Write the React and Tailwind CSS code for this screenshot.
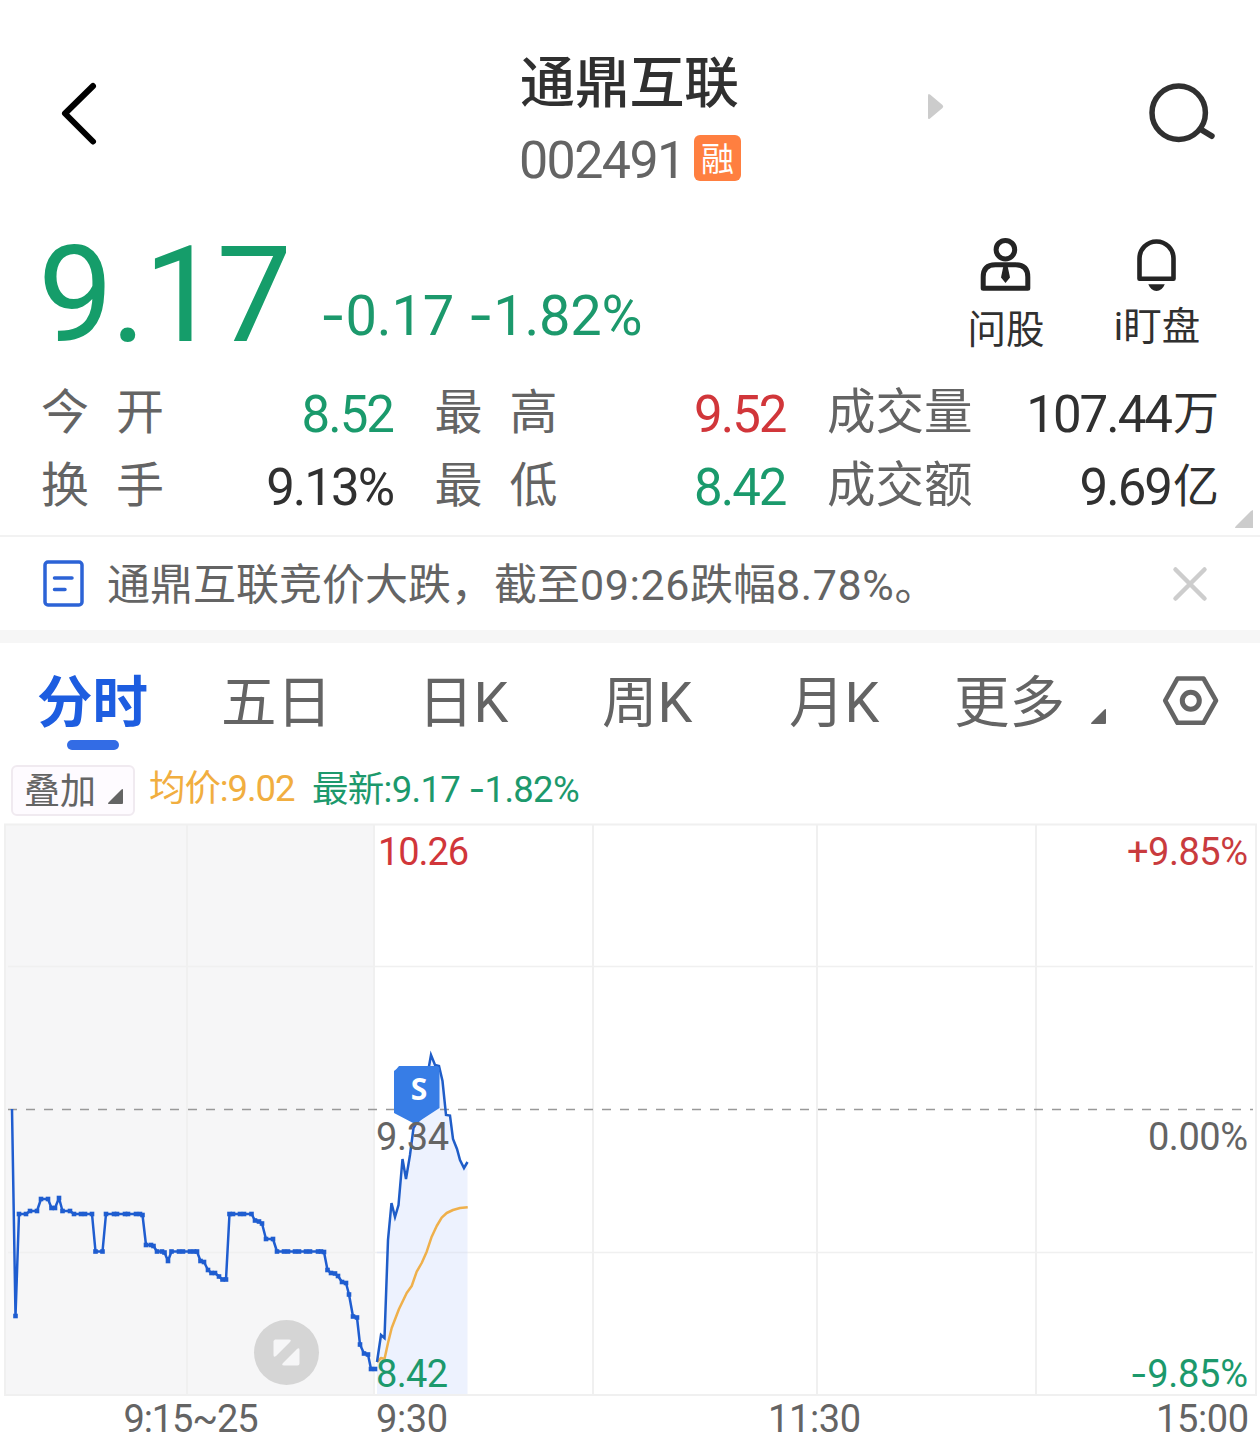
import React, { useState } from "react";

const stats = [
  { label: "今开", value: "8.52", color: "text-[#1a9a6c]", spread: true },
  { label: "最高", value: "9.52", color: "text-[#d1363a]", spread: true },
  { label: "成交量", value: "107.44", unit: "万", color: "text-[#303030]" },
  { label: "换手", value: "9.13%", color: "text-[#303030]", spread: true },
  { label: "最低", value: "8.42", color: "text-[#1a9a6c]", spread: true },
  { label: "成交额", value: "9.69", unit: "亿", color: "text-[#303030]" },
];

const tabs = [
  { name: "分时", pos: "ml-[37px] w-[110px]" },
  { name: "五日", pos: "ml-[74px] w-[109px]" },
  { name: "日K", pos: "ml-[88px] w-[93px]" },
  { name: "周K", pos: "ml-[91px] w-[94px]" },
  { name: "月K", pos: "ml-[93px] w-[94px]" },
  { name: "更多", pos: "ml-[71px] w-[108px]" },
];

// Call auction, 9:15 - 9:25
const auction = [
  [12, 1109], [15.5, 1316], [19, 1214], [26, 1214], [30, 1211], [37, 1211],
  [41, 1199], [48, 1199], [51.5, 1208], [55, 1208], [59, 1198], [62.5, 1211],
  [70, 1211], [74, 1214], [81, 1214], [85, 1214], [92, 1214], [95.5, 1251.5],
  [102.5, 1251.5], [106, 1214], [114, 1214], [117, 1214], [125, 1214],
  [128, 1214], [136, 1214], [140, 1214], [142.5, 1215], [146, 1245], [151, 1245],
  [153.5, 1246], [157, 1251.5], [162, 1251.5], [164.5, 1252.5], [168, 1261],
  [171.5, 1251.5], [179, 1251.5], [183, 1251.5], [190, 1251.5], [194, 1251.5],
  [197, 1251.5], [200.5, 1261], [204, 1262], [208, 1270], [211.5, 1273],
  [215, 1273], [219, 1276.5], [222.5, 1279.5], [226, 1279.5], [229.5, 1214],
  [233, 1214], [240, 1214], [244, 1214], [251.5, 1214], [255, 1220.5],
  [259, 1221.5], [262, 1223.5], [266, 1239], [273, 1239], [277, 1251.5],
  [284, 1251.5], [288, 1251.5], [295, 1251.5], [299, 1251.5], [306, 1251.5],
  [310, 1251.5], [318, 1251.5], [321, 1251.5], [324, 1252], [327.5, 1270],
  [331, 1273], [335, 1273.5], [338, 1276], [342, 1282], [346, 1283],
  [349, 1294.5], [353, 1316.5], [357, 1317.5], [360, 1344.5], [364, 1353.5],
  [368, 1354.5], [371, 1369], [375, 1369],
];

// Continuous trading from 9:30
const session = [
  [377, 1362], [381, 1335], [384.5, 1338], [388, 1240], [391.5, 1203],
  [395, 1217], [398.5, 1205], [402.5, 1159], [406, 1179], [410, 1155],
  [413.5, 1128], [417, 1122], [421, 1118], [424, 1100], [428, 1072],
  [431, 1055], [435, 1065], [439, 1066], [442.5, 1081], [446, 1115],
  [450, 1115.5], [453, 1139], [457, 1149], [460, 1160], [464, 1168],
  [467.5, 1162],
];

const average = [
  [377, 1362], [381, 1358], [384.5, 1359], [388, 1343], [391.7, 1328],
  [399, 1309], [406.7, 1293], [411.7, 1286], [416.7, 1271.7], [421.7, 1263],
  [426.7, 1251.7], [431.7, 1236.7], [436.7, 1226], [441.7, 1217.7],
  [446.7, 1213], [453, 1210], [460, 1208], [467.7, 1207.3],
];

const toPoints = (data) => data.map((p) => p.join(",")).join(" ");

const Minus = () => <span className="font-['Inter']">-</span>;

const Header = () => (
  <header className="flex h-[216px] items-start">
    <button className="mt-[80px] ml-[59px]">
      <svg width="40" height="67" viewBox="59 80 40 67" fill="none">
        <path d="M93 86 65 113.5 93 141.5" stroke="#000" strokeWidth="6" strokeLinecap="round" strokeLinejoin="round" />
      </svg>
    </button>
    <div className="mt-[53px] ml-[421px] w-[224px]">
      <h1 className="h-[58px] text-[55px] leading-[60px] font-medium tracking-[-0.300px] whitespace-nowrap text-[#303030]">通鼎互联</h1>
      <div className="mt-[20px] flex items-start">
        <span className="mt-[1px] -ml-px w-[175px] text-[52px] leading-[58px] tracking-[-1.600px] text-[#646464]">002491</span>
        <span className="mt-[4px] flex h-[46px] w-[47px] items-center justify-center rounded-[6px] bg-[#ff7f40] pt-[2px] text-[33px] leading-none text-white">融</span>
      </div>
    </div>
    <svg className="mt-[92px] ml-[183px]" width="17" height="29" viewBox="927 92 17 29">
      <path d="M928 95.5Q928 93 930 94.5L942.5 105Q944 106.500 942.500 108L930 118.500Q928 120 928 117.500Z" fill="#ccc" />
    </svg>
    <button className="mt-[80px] ml-[203px]">
      <svg width="72" height="66" viewBox="1147 80 72 66" fill="none" stroke="#303030">
        <circle cx="1178.700" cy="112.700" r="26.700" strokeWidth="5.500" />
        <path d="M1201 129.500 1211.700 136" strokeWidth="6" strokeLinecap="round" />
      </svg>
    </button>
  </header>
);

const PriceRow = () => (
  <section className="flex h-[156px] items-start text-[#159d6a]">
    <span className="ml-[38px] w-[282px] text-[134px] leading-[160px] tracking-[-2.500px]">9.17</span>
    <span className="mt-[67px] w-[640px] text-[56px] leading-[64px] tracking-[-0.200px] whitespace-pre text-[#1c996c]">
      <Minus />0.17 <Minus />1.82%
    </span>
    <button className="mt-[20px] w-[92px] text-center text-[#303030]">
      <svg className="mx-auto" width="54" height="58" viewBox="979 236 54 58" fill="none" stroke="#242424" strokeWidth="5">
        <circle cx="1005.400" cy="249.700" r="9.300" />
        <path d="M983.200 288.200V277Q983.200 264.800 995.400 264.800H1015.600Q1027.800 264.800 1027.800 277V288.200Z" strokeLinejoin="round" />
        <path d="M1003.200 267H1007.800L1010 277.500 1005.500 283 1001 277.500Z" fill="#242424" stroke="none" />
      </svg>
      <span className="mt-[11px] block text-[38.500px] leading-[50px] whitespace-nowrap">问股</span>
    </button>
    <button className="mt-[20px] ml-[58px] w-[94px] text-center text-[#303030]">
      <svg className="mx-auto" width="54" height="58" viewBox="1130 236 54 58" fill="none">
        <path d="M1139.500 278.700V258.500A17 17 0 0 1 1173.500 258.500V278.700Z" stroke="#242424" strokeWidth="4.600" strokeLinejoin="round" />
        <path d="M1148.300 284.300H1164.800Q1162 291 1156.500 291T1148.300 284.300Z" fill="#242424" />
      </svg>
      <span className="mt-[8px] block text-[38.500px] leading-[50px] whitespace-nowrap">i盯盘</span>
    </button>
  </section>
);

const StatGrid = () => (
  <section className="relative grid h-[163px] grid-cols-[352px_351px_390px] content-start gap-x-[41.500px] pt-[3px] pl-[41px]">
    {stats.map((s) => (
      <div key={s.label} className="flex h-[73px] items-start justify-between">
        <span className={s.spread ? "mt-[4px] text-[48px] leading-[68px] tracking-[27px] text-[#646464]" : "mt-[4px] text-[48.500px] leading-[68px] text-[#646464]"}>
          {s.label}
        </span>
        <span className={`mt-[4px] text-[51px] leading-[72px] tracking-[-2px] ${s.color}`}>
          {s.value}
          {s.unit && <span className="relative -top-[3px] left-[2px] text-[46px] tracking-normal">{s.unit}</span>}
        </span>
      </div>
    ))}
    <svg className="absolute right-[7px] bottom-[7px]" width="18" height="18" viewBox="0 0 18 18">
      <path d="M18 0V18H1Q-1 18 1 16L16 1Z" fill="#ccc" />
    </svg>
  </section>
);

const NewsBar = ({ onClose }) => (
  <section className="flex h-[108px] items-center border-t-2 border-b-[13px] border-t-[#f2f2f2] border-b-[#f6f6f6] pl-[43px]">
    <svg width="42" height="48" viewBox="0.500 0.500 42 48" fill="none" stroke="#2c63d6">
      <rect x="2.500" y="2.500" width="37" height="43" rx="3" strokeWidth="3.500" />
      <path d="M12 18.500H29.500M12 30H22.500" strokeWidth="3.500" strokeLinecap="round" />
    </svg>
    <p className="mt-[3px] ml-[22px] w-[1063px] text-[43px] leading-[60px] whitespace-nowrap text-[#646464]">
      通鼎互联竞价大跌，截至<span className="tracking-[0.600px]">09:26</span>跌幅<span className="tracking-[0.600px]">8.78%</span>。
    </p>
    <button onClick={onClose}>
      <svg width="40" height="40" viewBox="0 0 40 40">
        <path d="M5.500 5.500 34.500 34.500M34.500 5.500 5.500 34.500" stroke="#cdcdcd" strokeWidth="4.500" strokeLinecap="round" />
      </svg>
    </button>
  </section>
);

const Corner = ({ className }) => (
  <svg className={className} width="15" height="15" viewBox="0 0 15 15">
    <path d="M15 1V14Q15 15 14 15H1Q-.5 15 .5 13.500L13 1Q15-1 15 1Z" fill="#646464" />
  </svg>
);

const Tabs = ({ active, setActive }) => (
  <nav className="flex h-[121px] items-start">
    {tabs.map((t) => (
      <button
        key={t.name}
        onClick={() => setActive(t.name)}
        className={`relative mt-[14px] h-[94px] text-left text-[55.500px] leading-[76px] whitespace-nowrap ${t.pos} ${
          active === t.name ? "font-bold text-[#1d5de0]" : "text-[#646464]"
        }`}
      >
        <span className="block">{t.name}</span>
        {active === t.name && (
          <span className="absolute top-[83px] left-[30px] h-[10px] w-[52px] rounded-full bg-[#336ce5]"></span>
        )}
      </button>
    ))}
    <Corner className="mt-[66px] ml-[29px]" />
    <svg className="mt-[31px] ml-[56px]" width="57" height="53" viewBox="1162 674 57 53" fill="none" stroke="#646464" strokeWidth="4.600">
      <path d="M1177.500 678.500H1203.500L1216 700.700 1203.500 722.800H1177.500L1165.200 700.700Z" strokeLinejoin="round" />
      <circle cx="1190.800" cy="700.700" r="8.500" strokeWidth="5" />
    </svg>
  </nav>
);

const Legend = () => (
  <div className="flex h-[56px] items-start text-[36.500px] leading-[50px] whitespace-nowrap">
    <button className="mt-[1px] ml-[11px] flex h-[51px] w-[124px] items-start rounded-[6px] border-2 border-[#f0eaf0] bg-[#fefbff] pl-[11px] text-[36px] text-[#646464]">
      叠加
      <Corner className="mt-[22px] ml-[12px]" />
    </button>
    <span className="ml-[14px] w-[163px] tracking-[-1.100px] text-[#f1ae40]">均价:9.02</span>
    <span className="tracking-[-0.700px] text-[#1c996c]">
      最新:9.17 <Minus />1.82%
    </span>
  </div>
);

const Chart = () => (
  <svg className="block" width="1260" height="621" viewBox="0 820 1260 621" fontSize="38">
    <rect x="5" y="824.500" width="369" height="570.500" fill="#f6f6f7" />
    <g fill="none" stroke="#f0f0f0" strokeWidth="2">
      <rect x="5" y="824.500" width="1251" height="570.500" />
      <path d="M187 825V1395M374 825V1395M593 825V1395M817 825V1395M1036 825V1395" />
      <path d="M8 966.500H1253M8 1252.500H1253" strokeWidth="1.500" />
    </g>
    <polygon points={`377,1394 ${toPoints(session)} 467.500,1394`} fill="#edf2fe" />
    <path d="M377 1252.500H467.500" stroke="#e4e8f3" strokeWidth="1.500" />
    <path d="M8 1109.500H1253" stroke="#999" strokeWidth="1.300" strokeDasharray="9 9" />

    <g fill="none" strokeWidth="2.500" strokeLinejoin="round">
      <polyline points={toPoints(auction)} stroke="#1f5dd0" />
      <polyline points={toPoints(average)} stroke="#efb04b" />
      <polyline points={toPoints(session)} stroke="#1f5dc8" strokeLinejoin="miter" />
    </g>
    {auction.slice(1).map(([x, y]) => (
      <rect key={x} x={x - 2.3} y={y - 2.3} width="4.600" height="4.600" fill="#1f5dd0" />
    ))}

    {/* Sell marker */}
    <path d="M399 1066H436Q439.500 1066 439.500 1069V1108L415 1124 394 1113V1071Q396 1070 399 1066Z" fill="#377de6" />
    <text x="419" y="1099.500" textAnchor="middle" fontSize="30" fontWeight="700" fontFamily="Open Sans" fill="#fff">S</text>

    {/* Expand button */}
    <circle cx="286.500" cy="1352.500" r="32.500" fill="#d5d5d5" />
    <path d="M275 1339.500H289Q292 1339.500 290 1342L276 1356Q273.500 1358 273.500 1355V1341ZM299.500 1350V1363.500Q299.500 1365.500 297.500 1365.500H284Q281 1365.500 283 1363L297 1349Q299.500 1347 299.500 1350Z" fill="#f6f6f7" />

    <text x="378" y="864.500" textLength="91" fill="#d1363a">10.26</text>
    <text x="1127" y="864.500" textLength="121" fill="#c93b3e">+9.85%</text>
    <text x="376" y="1149.500" textLength="73" fill="#646464">9.34</text>
    <text x="1148" y="1149.500" textLength="100" fill="#646464">0.00%</text>
    <text x="376" y="1386.500" textLength="72" fill="#1c996c">8.42</text>
    <text x="1130" y="1386.500" textLength="118" fill="#1c996c"><tspan fontFamily="Inter">-</tspan>9.85%</text>
    <g fill="#646464">
      <text x="123.500" y="1431.500" textLength="135">9:15~25</text>
      <text x="376" y="1431.500" textLength="72">9:30</text>
      <text x="768" y="1431.500" textLength="93">11:30</text>
      <text x="1156" y="1431.500" textLength="93">15:00</text>
    </g>
  </svg>
);

const App = () => {
  const [active, setActive] = useState("分时");
  const [showNews, setShowNews] = useState(true);

  return (
    <div className="h-[1441px] w-[1260px] overflow-hidden bg-white font-['Roboto','Noto_Sans_CJK_SC',sans-serif]">
      <Header />
      <PriceRow />
      <StatGrid />
      {showNews && <NewsBar onClose={() => setShowNews(false)} />}
      <Tabs active={active} setActive={setActive} />
      <Legend />
      <Chart />
    </div>
  );
};

export default App;
